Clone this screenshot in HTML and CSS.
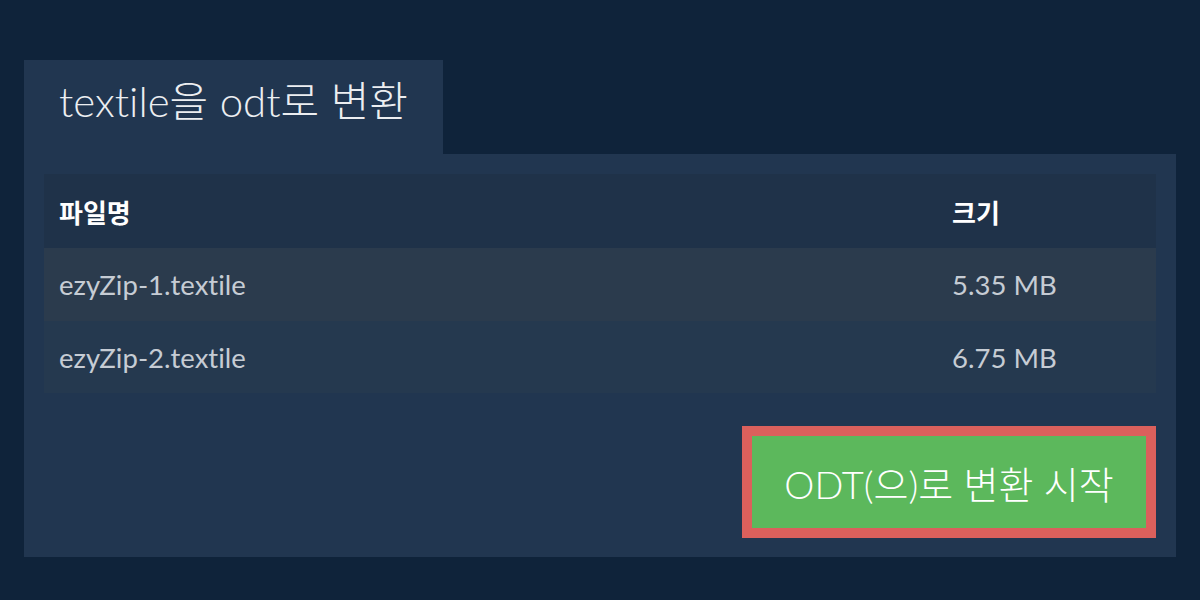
FILE: index.html
```html
<!DOCTYPE html>
<html lang="ko">
<head>
<meta charset="utf-8">
<link rel="stylesheet" href="styles.css">
</head>
<body>
<div class="wrap">
  <div class="tab"><h1 class="title">textile을 odt로 변환</h1></div>
  <div class="panel">
    <table class="files">
      <colgroup><col class="c-name"><col class="c-size"></colgroup>
      <thead>
        <tr><th>파일명</th><th>크기</th></tr>
      </thead>
      <tbody>
        <tr class="r1"><td>ezyZip-1.textile</td><td>5.35 MB</td></tr>
        <tr class="r2"><td>ezyZip-2.textile</td><td>6.75 MB</td></tr>
      </tbody>
    </table>
    <div class="actions">
      <button class="convert">ODT(으)로 변환 시작</button>
    </div>
  </div>
</div>
</body>
</html>
```
FILE: styles.css
```css
html, body {
  margin: 0;
  padding: 0;
  background: #0f233a;
  font-family: Lato, "Noto Sans CJK KR", sans-serif;
  font-variant-ligatures: none;
}
.wrap {
  padding: 60px 24px 0 24px;
}
.tab {
  display: inline-flex;
  align-items: center;
  height: 94px;
  padding: 0 35px;
  background: #213650;
  box-sizing: border-box;
}
.title {
  margin: 0;
  font-family: Lato, "Noto Sans CJK KR Light", "Noto Sans CJK KR", sans-serif;
  font-size: 42px;
  font-weight: 300;
  color: #eceef1;
  line-height: 1;
  position: relative;
  top: -6px;
}
.panel {
  background: #213650;
  padding: 20px 20px 19px 20px;
}
.files {
  width: 100%;
  table-layout: fixed;
  border-collapse: collapse;
  border-spacing: 0;
}
.c-name { width: 893px; }
.files th, .files td {
  text-align: left;
  padding: 0 15px;
  white-space: nowrap;
}
.files th {
  height: 74px;
  background: #1f3249;
  color: #ffffff;
  font-size: 26px;
  font-weight: 700;
}
.files td {
  height: 73px;
  font-size: 27.5px;
  color: #c6ccd4;
}
.r1 td { background: #2b3b4d; }
.r2 td { background: #25394f; height: 72px; }
.actions {
  display: flex;
  justify-content: flex-end;
  margin-top: 33px;
}
.convert {
  width: 414px;
  height: 112px;
  border: 10px solid #db605c;
  background: #5cb85c;
  color: #ffffff;
  font-family: Lato, "Noto Sans CJK KR Light", "Noto Sans CJK KR", sans-serif;
  font-size: 38px;
  font-weight: 300;
  padding: 0;
  box-sizing: border-box;
}
```
